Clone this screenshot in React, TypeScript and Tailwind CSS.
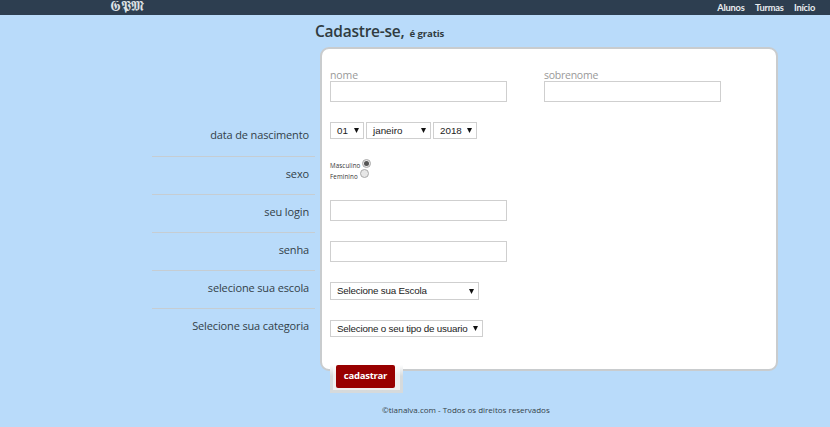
import React from "react";

const humanist = "font-['Open_Sans','Noto_Sans',sans-serif]";

const labels = [
  "data de nascimento",
  "sexo",
  "seu login",
  "senha",
  "selecione sua escola",
  "Selecione sua categoria",
];

function TextField({ label }: { label: string }) {
  return <input aria-label={label} className="block h-[21px] w-[177px] border border-[#cfcfcf] bg-white px-1 text-xs outline-none" />;
}

function Select({ value, className }: { value: string; className: string }) {
  return (
    <button className={`flex items-center justify-between whitespace-nowrap border border-[#cfcfcf] bg-white pl-1.5 pr-1 font-['Liberation_Sans',Arial,sans-serif] text-[9.8px] leading-none text-[#222] ${className}`}>
      <span>{value}</span>
      <svg className="shrink-0" width="5" height="5" viewBox="0 0 5 5" fill="#111"><path d="M0 0H5L2.5 5Z" /></svg>
    </button>
  );
}

function Radio({ label, checked = false }: { label: string; checked?: boolean }) {
  return (
    <label className="flex h-[10.5px] items-center gap-0.5 text-[6.2px] leading-none tracking-[0.12px] text-[#333]">
      <span className="pt-[6px]">{label}</span>
      <span className="flex size-[9px] shrink-0 items-center justify-center rounded-full border border-[#aaa] bg-[#e7e7e7]">
        {checked && <span className="size-[5px] rounded-full bg-[#555]" />}
      </span>
    </label>
  );
}

export default function App() {
  return (
    <div className={`h-[427px] w-[830px] overflow-hidden bg-[#b9dbfa] text-[#333f48] ${humanist}`}>
      <header className="flex h-[15px] items-start justify-between bg-[#2d3e50] pl-[110px] pr-[15px] text-white">
        <span className="font-['DejaVu_Sans','DejaVu_Serif',serif] text-[13.5px] leading-[13px] text-[#dce1e5]">𝕲𝕻𝕸</span>
        <nav className="flex gap-[10.5px] pt-[2px] font-['Lato',sans-serif] text-[9.3px] font-bold leading-[11px] tracking-[-0.25px] text-[#e8ecef]">
          <a>Alunos</a>
          <a>Turmas</a>
          <a>Início</a>
        </nav>
      </header>

      <h1 className="flex h-8 items-baseline gap-[5px] whitespace-nowrap pl-[315px] pt-[6px] font-semibold text-[#303b40]">
        <span className="text-[15.5px] leading-5 tracking-[-0.25px]">Cadastre-se,</span>
        <span className="text-[9.6px] font-bold leading-none tracking-[-0.1px]">é gratis</span>
      </h1>

      <main className="flex">
        <div className="ml-[152px] mr-px w-[163px] shrink-0 pt-[71px]">
          {labels.map((text) => (
            <div key={text} className="flex h-[38px] items-center justify-end whitespace-nowrap border-b border-[#c6cdd2] pb-1 pr-1.5 text-[11px] leading-none tracking-[-0.14px] first:h-[39px] first:pb-[5px] last:border-b-0 last:pb-[5px]">
              {text}
            </div>
          ))}
        </div>

        <form className="ml-1 h-[324px] w-[458px] shrink-0 rounded-[9px] border-2 border-[#c9ccce] bg-white pl-2 pt-[21px]">
          <div className="flex gap-[37px]">
            <div>
              <div className="h-[11px] text-[10.5px] leading-[10px] tracking-[-0.1px] text-[#999]">nome</div>
              <TextField label="nome" />
            </div>
            <div>
              <div className="h-[11px] text-[10.5px] leading-[10px] tracking-[-0.25px] text-[#999]">sobrenome</div>
              <TextField label="sobrenome" />
            </div>
          </div>
          <div className="mt-5 flex gap-0.5">
            <Select value="01" className="h-[17px] w-[34px]" />
            <Select value="janeiro" className="h-[17px] w-[65px]" />
            <Select value="2018" className="h-[17px] w-[44px]" />
          </div>
          <div className="mt-[19px] h-[42px]">
            <Radio label="Masculino" checked />
            <Radio label="Feminino" />
          </div>
          <TextField label="seu login" />
          <div className="h-5" />
          <TextField label="senha" />
          <Select value="Selecione sua Escola" className="mt-5 h-[18px] w-[149px] tracking-[-0.2px]" />
          <Select value="Selecione o seu tipo de usuario" className="mt-5 h-[17px] w-[153px] tracking-[-0.2px]" />
          <div className="mt-[28px] w-[73px] bg-linear-to-b from-white to-[#d6dadc] to-40% px-[3px] pb-[3px]">
            <div className="bg-linear-to-b from-white to-[#efefef] to-40% pb-[2px] pl-[3px]">
              <button className="block h-[23px] w-[59px] rounded-[2px] bg-[#980000] pb-px text-[9.5px] font-bold leading-none tracking-[-0.25px] text-white">cadastrar</button>
            </div>
          </div>
        </form>
      </main>

      <footer className="mt-[33px] pl-[382px] text-[8px] leading-[12px]">©tianalva.com - Todos os direitos reservados</footer>
    </div>
  );
}
